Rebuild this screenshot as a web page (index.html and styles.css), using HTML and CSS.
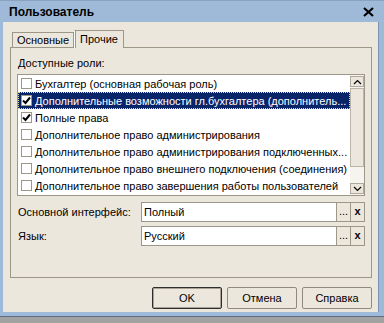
FILE: index.html
```html
<!DOCTYPE html>
<html lang="ru">
<head>
    <meta charset="UTF-8">
    <title>Пользователь</title>
    <link rel="stylesheet" href="styles.css">
</head>
<body>
    <div class="window">
        <div class="titlebar">
            <span class="title">Пользователь</span>
            <svg class="close" width="11" height="10" viewBox="0 0 11 10">
                <path d="M1 1 L10 9 M10 1 L1 9" stroke="#000" stroke-width="2.2" fill="none"/>
            </svg>
        </div>
        <div class="client">
            <div class="tabs">
                <div class="tab">Основные</div>
                <div class="tab active">Прочие</div>
            </div>
            <div class="panel">
                <div class="caption">Доступные роли:</div>
                <div class="list">
                    <div class="rows">
                        <div class="row"><span class="cb"></span><span class="txt">Бухгалтер (основная рабочая роль)</span></div>
                        <div class="row selected"><span class="cb checked"><svg width="9" height="9" viewBox="0 0 9 9"><path d="M1 4.5 L3.5 7 L8 1.5" stroke="#000" stroke-width="2" fill="none"/></svg></span><span class="txt">Дополнительные возможности гл.бухгалтера (дополнитель...</span></div>
                        <div class="row"><span class="cb checked"><svg width="9" height="9" viewBox="0 0 9 9"><path d="M1 4.5 L3.5 7 L8 1.5" stroke="#000" stroke-width="2" fill="none"/></svg></span><span class="txt">Полные права</span></div>
                        <div class="row"><span class="cb"></span><span class="txt">Дополнительное право администрирования</span></div>
                        <div class="row"><span class="cb"></span><span class="txt">Дополнительное право администрирования подключенных...</span></div>
                        <div class="row"><span class="cb"></span><span class="txt">Дополнительное право внешнего подключения (соединения)</span></div>
                        <div class="row"><span class="cb"></span><span class="txt">Дополнительное право завершения работы пользователей</span></div>
                    </div>
                    <div class="scroll">
                        <div class="sbtn"><svg width="9" height="6" viewBox="0 0 9 6"><path d="M1 5 L4.5 1.5 L8 5" stroke="#000" stroke-width="1.2" fill="none"/></svg></div>
                        <div class="thumb"></div>
                        <div class="track"></div>
                        <div class="sbtn"><svg width="9" height="6" viewBox="0 0 9 6"><path d="M1 1 L4.5 4.5 L8 1" stroke="#000" stroke-width="1.2" fill="none"/></svg></div>
                    </div>
                </div>
                <div class="field">
                    <span class="label">Основной интерфейс:</span>
                    <span class="input">Полный</span>
                    <span class="fbtn dots">...</span>
                    <span class="fbtn clear">x</span>
                </div>
                <div class="field">
                    <span class="label">Язык:</span>
                    <span class="input">Русский</span>
                    <span class="fbtn dots">...</span>
                    <span class="fbtn clear">x</span>
                </div>
            </div>
            <div class="buttons">
                <div class="btn default">OK</div>
                <div class="btn">Отмена</div>
                <div class="btn">Справка</div>
            </div>
        </div>
    </div>
</body>
</html>
```

FILE: styles.css
```css
body {
    margin: 0;
    background-color: #a2a2a2;
    font-family: "Liberation Sans", Arial, sans-serif;
    font-size: 11px;
    color: #000;
}
.window {
    width: 384px;
    box-sizing: border-box;
    background-color: #9fbad9;
    border-top: 1px solid #8aa2c0;
    border-bottom: 1px solid #5d6e86;
    padding: 0 6px 4px 3px;
}
.titlebar {
    height: 21px;
    display: flex;
    align-items: center;
    justify-content: space-between;
    padding: 0 4px 0 6px;
}
.title {
    font-weight: bold;
    font-size: 12px;
}
.client {
    height: 290px;
    background-color: #ece7dd;
    box-shadow: 1px 0 0 #7d95b5;
    display: flex;
    flex-direction: column;
}
.tabs {
    display: flex;
    align-items: flex-end;
    height: 17px;
    margin-top: 8px;
    padding-left: 9px;
    position: relative;
    z-index: 1;
}
.tab {
    height: 15px;
    width: 62px;
    box-sizing: border-box;
    border: 1px solid #9d9788;
    border-bottom: none;
    line-height: 15px;
    text-align: center;
}
.tab.active {
    width: 50px;
    height: 18px;
    margin-bottom: -1px;
    line-height: 17px;
    background-color: #ece7dd;
    border-left: 1px solid #fff;
    box-shadow: inset 1px 0 0 #9d9788;
}
.panel {
    height: 231px;
    box-sizing: border-box;
    margin: 0 6px 0 7px;
    border: 1px solid #9d9788;
    padding: 0 6px;
}
.caption {
    margin-top: 8px;
    height: 14px;
    line-height: 14px;
    padding-left: 1px;
}
.list {
    margin-top: 4px;
    height: 122px;
    box-sizing: border-box;
    border: 1px solid #9d9788;
    background-color: #fff;
    display: flex;
}
.rows {
    flex: 1;
    min-width: 0;
    overflow: hidden;
}
.row {
    height: 17px;
    display: flex;
    align-items: center;
}
.row.selected {
    background-color: #0a246a;
    color: #fff;
    outline: 1px dotted #e6e08c;
    outline-offset: -1px;
}
.cb {
    flex: none;
    width: 11px;
    height: 11px;
    box-sizing: border-box;
    border: 1px solid #9d9788;
    background-color: #fff;
    margin: 0 3px 0 3px;
    display: flex;
    align-items: center;
    justify-content: center;
}
.txt {
    white-space: nowrap;
}
.scroll {
    flex: none;
    width: 14px;
    display: flex;
    flex-direction: column;
    padding: 1px 0;
    background-color: #f6f4ef;
}
.sbtn {
    height: 11px;
    box-sizing: border-box;
    border: 1px solid #b0aa9e;
    background-color: #ece7dd;
    display: flex;
    align-items: center;
    justify-content: center;
}
.thumb {
    height: 79px;
    margin-top: 1px;
    box-sizing: border-box;
    border: 1px solid #bcb6aa;
    background-color: #ece7dd;
}
.track {
    flex: 1;
}
.field {
    display: flex;
    height: 20px;
    margin-top: 6px;
}
.field + .field {
    margin-top: 4px;
}
.label {
    width: 123px;
    padding-left: 1px;
    line-height: 20px;
}
.input {
    flex: 1;
    box-sizing: border-box;
    border: 1px solid #9d9788;
    background-color: #fff;
    line-height: 18px;
    padding-left: 2px;
}
.fbtn {
    width: 14px;
    box-sizing: border-box;
    border: 1px solid #9d9788;
    border-left: none;
    text-align: center;
    line-height: 16px;
    font-weight: bold;
}
.fbtn.dots {
    font-weight: normal;
}
.buttons {
    display: flex;
    justify-content: flex-end;
    gap: 5px;
    margin-top: 9px;
    padding-right: 6px;
}
.btn {
    width: 70px;
    height: 22px;
    box-sizing: border-box;
    border: 1px solid #8f8a7c;
    border-radius: 2px;
    background-color: #ece7dd;
    text-align: center;
    line-height: 20px;
}
.btn.default {
    border-color: #2e2e2e;
    box-shadow: inset 0 0 0 1px #a8a294;
}
```
